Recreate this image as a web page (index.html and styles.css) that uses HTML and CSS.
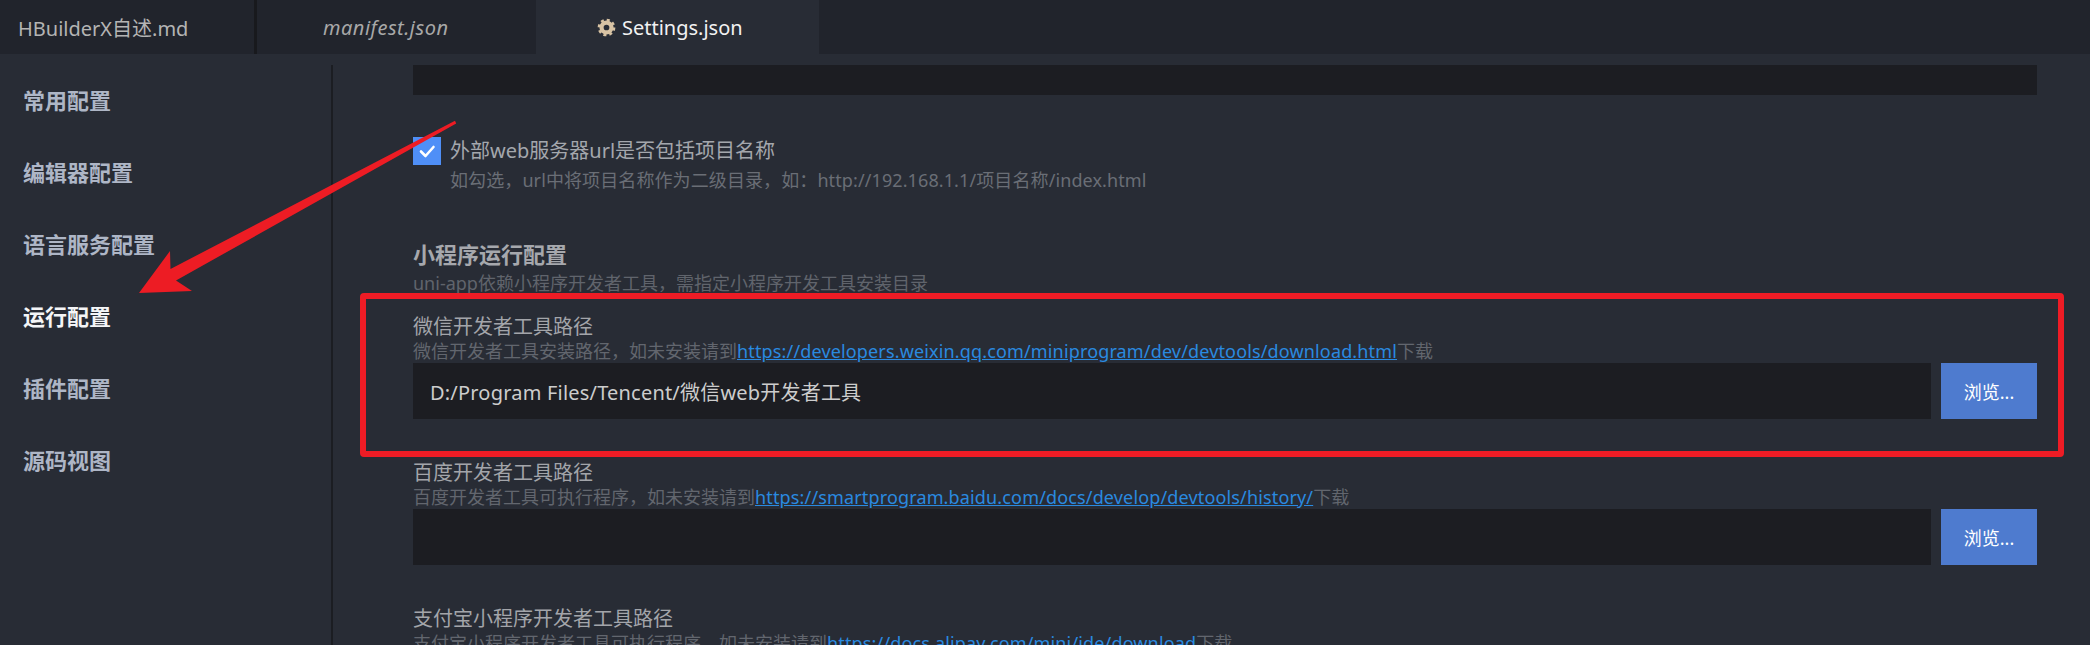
FILE: index.html
```html
<!DOCTYPE html>
<html lang="zh-CN">
<head>
<meta charset="utf-8">
<title>Settings.json</title>
<link rel="stylesheet" href="styles.css">
</head>
<body>
<div class="app">
  <div class="tabbar">
    <div class="tab tab-readme">HBuilderX自述.md</div>
    <div class="tab tab-manifest">manifest.json</div>
    <div class="tab tab-settings">
      <svg class="gear" viewBox="0 0 18 18" width="19" height="19" aria-hidden="true">
        <circle cx="9" cy="9" r="4.7" fill="none" stroke="#d8c3a4" stroke-width="4"/>
        <circle cx="9" cy="9" r="7.2" fill="none" stroke="#d8c3a4" stroke-width="2.4" stroke-dasharray="2.83 2.83"/>
      </svg>
      <span>Settings.json</span>
    </div>
  </div>

  <div class="main">
    <nav class="sidebar">
      <div class="nav-item">常用配置</div>
      <div class="nav-item">编辑器配置</div>
      <div class="nav-item">语言服务配置</div>
      <div class="nav-item active">运行配置</div>
      <div class="nav-item">插件配置</div>
      <div class="nav-item">源码视图</div>
    </nav>
    <div class="divider"></div>

    <div class="content">
      <div class="field-top"></div>

      <div class="check-row">
        <div class="checkbox">
          <svg viewBox="0 0 28 28" width="28" height="28" aria-hidden="true">
            <polyline points="8,14.5 12.5,19 20.5,10" fill="none" stroke="#ffffff" stroke-width="2.6" stroke-linecap="round" stroke-linejoin="round"/>
          </svg>
        </div>
        <div class="check-text">
          <div class="check-label">外部web服务器url是否包括项目名称</div>
          <div class="check-hint">如勾选，url中将项目名称作为二级目录，如：http://192.168.1.1/项目名称/index.html</div>
        </div>
      </div>

      <div class="group-head">
        <div class="group-title">小程序运行配置</div>
        <div class="group-sub">uni-app依赖小程序开发者工具，需指定小程序开发工具安装目录</div>
      </div>

      <div class="path-item">
        <div class="path-label">微信开发者工具路径</div>
        <div class="path-hint">微信开发者工具安装路径，如未安装请到<a class="link" href="#">https://developers.weixin.qq.com/miniprogram/dev/devtools/download.html</a>下载</div>
        <div class="path-row">
          <div class="path-input">D:/Program Files/Tencent/微信web开发者工具</div>
          <div class="btn">浏览...</div>
        </div>
      </div>

      <div class="path-item">
        <div class="path-label">百度开发者工具路径</div>
        <div class="path-hint">百度开发者工具可执行程序，如未安装请到<a class="link" href="#">https://smartprogram.baidu.com/docs/develop/devtools/history/</a>下载</div>
        <div class="path-row">
          <div class="path-input"></div>
          <div class="btn">浏览...</div>
        </div>
      </div>

      <div class="path-item">
        <div class="path-label">支付宝小程序开发者工具路径</div>
        <div class="path-hint">支付宝小程序开发者工具可执行程序，如未安装请到<a class="link" href="#">https://docs.alipay.com/mini/ide/download</a>下载</div>
        <div class="path-row">
          <div class="path-input"></div>
          <div class="btn">浏览...</div>
        </div>
      </div>
    </div>
  </div>

  <div class="red-box"></div>
  <svg class="arrow" viewBox="0 0 2090 645" width="2090" height="645" aria-hidden="true">
    <polygon fill="#ed1c24" points="139,293 170,251 170.5,269 455,120.8 456.2,123.4 176,280.5 192,291"/>
  </svg>
</div>
</body>
</html>
```

FILE: styles.css
```css
* {
  box-sizing: border-box;
}

html, body {
  margin: 0;
  padding: 0;
  background: #282c35;
}

body {
  font-family: "Noto Sans", "Noto Sans CJK SC", sans-serif;
  overflow: hidden;
}

.app {
  position: relative;
  width: 2090px;
  height: 645px;
  overflow: hidden;
  background: #282c35;
  display: flex;
  flex-direction: column;
}

/* ---------- tabs ---------- */
.tabbar {
  height: 54px;
  flex: none;
  display: flex;
  background: #21242c;
}

.tab {
  height: 54px;
  display: flex;
  align-items: center;
  font-size: 20px;
  white-space: nowrap;
}

.tab-readme {
  width: 257px;
  padding-left: 18px;
  color: #b4b4b4;
  border-right: 3px solid #18191d;
}

.tab-manifest {
  width: 279px;
  padding-left: 66px;
  color: #a8a8a8;
  font-style: italic;
  letter-spacing: 0.5px;
}

.tab-settings {
  width: 283px;
  padding-left: 61px;
  background: #282c35;
  color: #f2f2f2;
}

.gear {
  margin-right: 6px;
  flex: none;
}

/* ---------- main ---------- */
.main {
  flex: 1;
  display: flex;
  min-height: 0;
}

.sidebar {
  width: 331px;
  flex: none;
  padding-top: 9px;
}

.nav-item {
  height: 72px;
  display: flex;
  align-items: center;
  padding-left: 23px;
  font-size: 22px;
  font-weight: bold;
  color: #aeb6c6;
}

.nav-item.active {
  color: #f4f5f7;
}

.divider {
  width: 2px;
  flex: none;
  margin-top: 11px;
  background: #1b1d22;
}

.content {
  flex: 1;
  padding: 11px 53px 0 80px;
}

.field-top {
  height: 30px;
  background: #1c1d22;
  margin-bottom: 42px;
}

/* ---------- checkbox row ---------- */
.check-row {
  display: flex;
  align-items: flex-start;
}

.checkbox {
  width: 28px;
  height: 28px;
  flex: none;
  background: #4f8ff7;
  margin-right: 9px;
}

.checkbox svg {
  display: block;
}

.check-label {
  font-size: 20px;
  line-height: 28px;
  color: #a4a7ad;
}

.check-hint {
  margin-top: 3px;
  font-size: 18px;
  line-height: 24px;
  color: #6a6e76;
  letter-spacing: 0.1px;
}

/* ---------- group ---------- */
.group-head {
  margin-top: 52px;
  margin-bottom: 19px;
}

.group-title {
  font-size: 22px;
  line-height: 20px;
  font-weight: bold;
  color: #a6a8ad;
}

.group-sub {
  margin-top: 6px;
  font-size: 18px;
  line-height: 26px;
  color: #60646c;
}

.path-item {
  margin-bottom: 42px;
}

.path-label {
  font-size: 20px;
  line-height: 24px;
  color: #a3a5aa;
}

.path-hint {
  font-size: 18px;
  line-height: 24px;
  color: #62666e;
  white-space: nowrap;
}

.link {
  color: #2a8ae0;
  text-decoration: underline;
  letter-spacing: 0.15px;
}

.path-row {
  display: flex;
  gap: 10px;
}

.path-input {
  flex: 1;
  height: 56px;
  background: #1c1d22;
  display: flex;
  align-items: center;
  padding-left: 17px;
  font-size: 20px;
  color: #cdcdcd;
  letter-spacing: 0.2px;
}

.btn {
  width: 96px;
  height: 56px;
  flex: none;
  background: #4e7bcf;
  color: #ffffff;
  font-size: 18px;
  display: flex;
  align-items: center;
  justify-content: center;
}

/* ---------- annotations ---------- */
.red-box {
  position: absolute;
  left: 360px;
  top: 293px;
  width: 1704px;
  height: 164px;
  border: 6px solid #ee1c25;
  border-radius: 4px;
}

.arrow {
  position: absolute;
  left: 0;
  top: 0;
  pointer-events: none;
}
```
